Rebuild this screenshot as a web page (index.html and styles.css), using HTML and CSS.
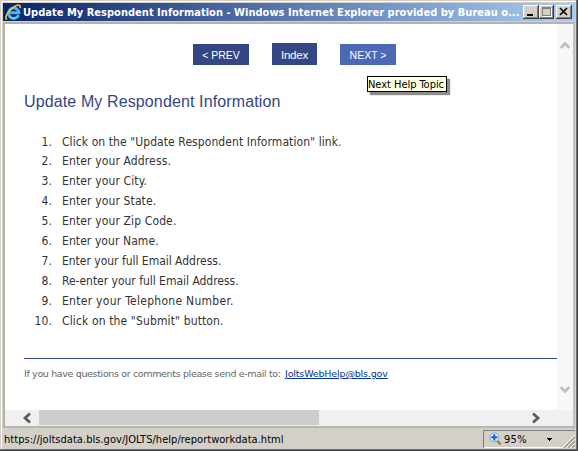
FILE: index.html
```html
<!DOCTYPE html>
<html lang="en">
<head>
<meta charset="utf-8">
<title>Update My Respondent Information</title>
<link rel="stylesheet" href="styles.css">
</head>
<body>
<div class="window">
  <header class="titlebar">
    <svg class="logo" width="17" height="17" viewBox="0 0 17 17">
      <path d="M13.6 11.3A5.3 5.3 0 1 1 14 8.8H5" fill="none" stroke="#45b6ee" stroke-width="2.9"/>
      <path d="M13.2 10.9A5.3 5.3 0 0 1 4.2 12" fill="none" stroke="#87dcfa" stroke-width="1"/>
      <path d="M1.9 15.5C-1 13.6 3.5 6.2 9.3 2.6C13.3.2 16 .8 15 4.1" fill="none" stroke="#f5c52b" stroke-width="1.6"/>
    </svg>
    <span class="title">Update My Respondent Information - Windows Internet Explorer provided by Bureau o...</span>
    <span class="controls">
      <svg class="control" width="16" height="14" viewBox="0 0 16 14" shape-rendering="crispEdges"><path d="M4 9h6v2H4z"/></svg>
      <svg class="control" width="15" height="14" viewBox="0 0 15 14" shape-rendering="crispEdges"><path d="M3 2h9v9H3z" fill="#808080"/><path d="M4 4h7v6H4z" fill="#d4d0c8"/><path d="M12 3h1v9H4v-1h8z" fill="#fff"/></svg>
      <svg class="control close" width="16" height="14" viewBox="0 0 16 14"><path d="M4 3l7 7M11 3l-7 7" stroke="#000" stroke-width="1.7"/></svg>
    </span>
  </header>
  <div class="viewport">
    <main class="page">
      <nav class="nav">
        <a class="button">&lt; PREV</a>
        <a class="button index">Index</a>
        <a class="button next">NEXT &gt;<span class="tooltip"><span class="tip-text">Next Help Topic</span></span></a>
      </nav>
      <h1><span>Update My Respondent Information</span></h1>
      <ol class="steps">
        <li><b>1.</b><span>Click on the "Update Respondent Information" link.</span></li>
        <li><b>2.</b><span class="wide">Enter your Address.</span></li>
        <li><b>3.</b><span class="wide">Enter your City.</span></li>
        <li><b>4.</b><span class="wide">Enter your State.</span></li>
        <li><b>5.</b><span class="wide">Enter your Zip Code.</span></li>
        <li><b>6.</b><span>Enter your Name.</span></li>
        <li><b>7.</b><span class="plain">Enter your full Email Address.</span></li>
        <li><b>8.</b><span class="plain">Re-enter your full Email Address.</span></li>
        <li><b>9.</b><span class="widest">Enter your Telephone Number.</span></li>
        <li><b>10.</b><span class="wide">Click on the "Submit" button.</span></li>
      </ol>
      <footer class="contact"><span class="ask">If you have questions or comments please send e-mail to:</span><a>JoltsWebHelp@bls.gov</a></footer>
    </main>
    <div class="vscroll">
      <svg width="16" height="12" viewBox="0 0 16 12"><path d="M3.7 9L8 4.5L12.3 9" fill="none" stroke="#bfbfbf" stroke-width="2.6"/></svg>
      <svg width="16" height="12" viewBox="0 0 16 12"><path d="M3.7 3L8 7.5L12.3 3" fill="none" stroke="#bfbfbf" stroke-width="2.6"/></svg>
    </div>
    <div class="hscroll">
      <svg width="34" height="16" viewBox="0 0 34 16"><path d="M25 3.5L20 8L25 12.5" fill="none" stroke="#5c5c5c" stroke-width="2.8"/></svg>
      <span class="thumb"></span>
      <svg class="right" width="34" height="16" viewBox="0 0 34 16"><path d="M9 3.5L14 8L9 12.5" fill="none" stroke="#5c5c5c" stroke-width="2.8"/></svg>
    </div>
  </div>
  <div class="status">
    <span class="url">https://joltsdata.bls.gov/JOLTS/help/reportworkdata.html</span>
    <span class="zoom">
      <svg width="13" height="14" viewBox="0 0 13 14"><path d="M8 8.5l3.6 3.8" stroke="#b87840" stroke-width="2.4"/><circle cx="5.3" cy="5.3" r="4.5" fill="#dceeff" stroke="#8aa6c8"/><path d="M5.3 2.2v6.2M2.2 5.3h6.2" stroke="#0869c8" stroke-width="2"/></svg>
      <span class="percent">95%</span>
      <svg class="arrow" width="5" height="3" viewBox="0 0 5 3" shape-rendering="crispEdges"><path d="M0 0h5v1H0zM1 1h3v1H1zM2 2h1v1H2z"/></svg>
    </span>
    <svg class="grip" width="13" height="13" viewBox="0 0 13 13"><path d="M0 13L13 0M4 13l9-9M8 13l5-5" stroke="#fff"/><path d="M1.5 13L13 1.5M2.5 13L13 2.5M5.5 13L13 5.5M6.5 13L13 6.5M9.5 13L13 9.5M10.5 13l2.5-2.5" stroke="#85827c" stroke-width=".9"/></svg>
  </div>
</div>
</body>
</html>
```
FILE: styles.css
```css
* { box-sizing: border-box; }
body { margin: 0; overflow: hidden; }
svg { display: block; flex: none; }
.window {
  width: 578px; height: 451px; padding: 3px 3px 2px;
  display: flex; flex-direction: column;
  background: #d4d0c8;
  box-shadow: inset -1px -1px #404040, inset -2px -2px #707070, inset 1px 1px #d4d0c8, inset 2px 2px #fff;
  font-family: "DejaVu Sans Condensed", "DejaVu Sans", sans-serif;
  font-stretch: condensed;
}
.titlebar {
  height: 18px; flex: none; display: flex; align-items: center;
  padding-left: 2px; padding-right: 3px; white-space: nowrap;
  background: linear-gradient(90deg, #0a246a, #a6caf0 98%);
}
.title { margin-left: 1px; width: 500px; color: #fff; font-size: 11px; font-weight: bold; line-height: 18px; letter-spacing: .02px; padding-top: 1px; }
.controls { display: flex; margin-top: -1px; }
.control {
  background: #d4d0c8;
  box-shadow: inset -1px -1px #404040, inset 1px 1px #fff, inset -2px -2px #808080;
}
.close { margin-left: 2px; }
.viewport {
  margin-top: 1px; height: 406px; flex: none; width: 572px;
  display: grid; grid-template-columns: 552px 16px; grid-template-rows: 386px 16px;
  border: 2px solid #b5b2ac; border-right-color: #c4c2be; border-bottom-color: #b8b5b0;
}
.page { background: #fff; padding: 19px 0 0 19px; }
.nav { display: flex; align-items: flex-end; gap: 23px; padding-left: 169px; height: 22px; }
.button {
  position: relative; width: 56px; height: 21px; background: #344684; color: #fff;
  font: 10.5px/22px "Liberation Sans", sans-serif; text-align: center;
}
.index { width: 45px; height: 22px; font-size: 11.5px; line-height: 24px; letter-spacing: -.2px; }
.next { background: #4e68b8; }
.tooltip {
  position: absolute; left: 27px; top: 32px; width: 80px; height: 16px;
  background: #ffffe1; border: 1px solid #000; color: #000;
  box-shadow: 3px 3px 1px rgba(0,0,0,.45); text-align: left; white-space: nowrap;
  font: condensed 11px/15px "DejaVu Sans Condensed", "DejaVu Sans", sans-serif;
  letter-spacing: -.04px;
}
h1 { margin: 26px 0 0; color: #344684; font: 16px/22px "Liberation Sans", sans-serif; letter-spacing: .12px; }
.steps { list-style: none; margin: 19px 0 0; padding: 0; color: #333; font-size: 12px; line-height: 20px; letter-spacing: .08px; }
.steps li { display: flex; height: 20px; }
.steps li:first-child { height: 19px; }
.steps b { width: 28px; margin-right: 10px; font-weight: normal; text-align: right; }
.wide { letter-spacing: .13px; }
.widest { letter-spacing: .28px; }
.plain { letter-spacing: -.02px; }
.contact { display: flex; margin-top: 27px; border-top: 1px solid #344684; padding-top: 6px; color: #666; font: 9.5px/18px "DejaVu Sans", sans-serif; white-space: nowrap; }
.ask { width: 261px; letter-spacing: -.35px; }
.contact a { color: #003399; text-decoration: underline; letter-spacing: -.16px; }
.vscroll { background: #f8f8f8; display: flex; flex-direction: column; justify-content: space-between; padding: 15px 0 14px; }
.hscroll { grid-column: 1 / 3; background: #f0f0f0; display: flex; }
.thumb { width: 280px; height: 15px; background: #cdcdcd; }
.right { margin-left: 205px; }
.status { height: 21px; display: flex; padding-top: 2px; font-size: 11px; color: #000; white-space: nowrap; }
.url { width: 480px; padding-left: 1px; line-height: 19px; letter-spacing: .035px; }
.zoom {
  width: 92px; height: 18px; display: flex; align-items: center; padding-left: 6px;
  box-shadow: inset 1px 1px #808080, inset 0 -1px #fff;
}
.percent { margin-left: 2px; width: 43px; padding-top: 1px; line-height: 18px; letter-spacing: .3px; }
.arrow { margin-top: 1px; }
.grip { margin: 5px 0 0 -13px; }
```
